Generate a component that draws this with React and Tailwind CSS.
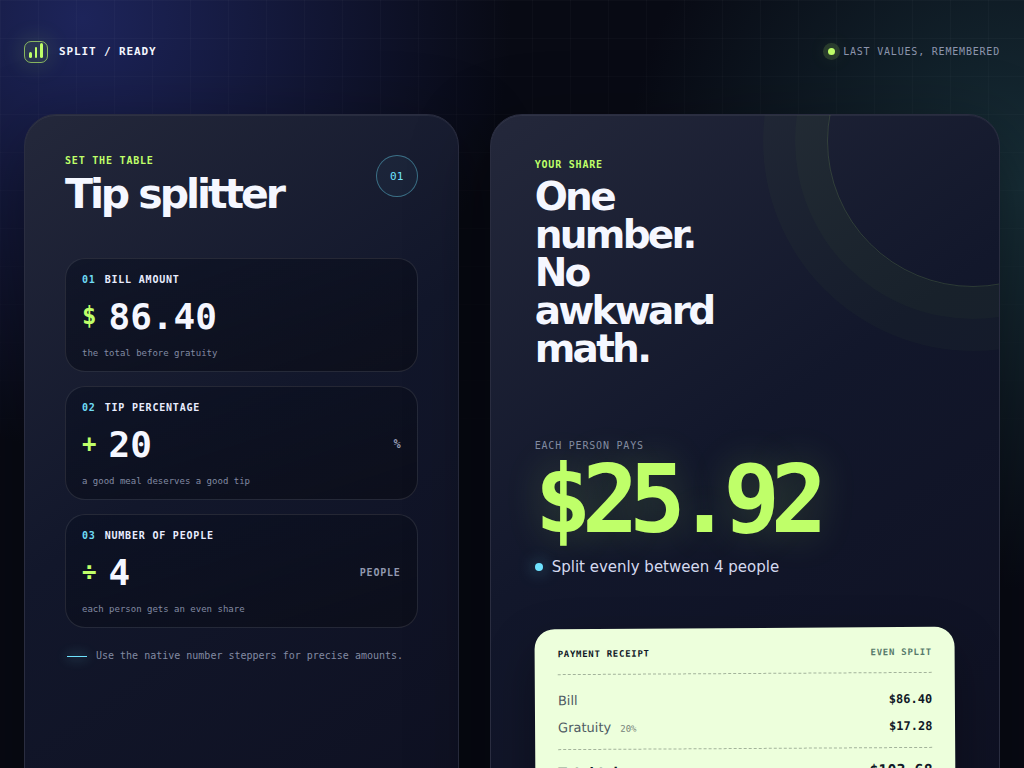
import React, { useState } from "react";

const formatMoney = (value) =>
  new Intl.NumberFormat("en-US", { style: "currency", currency: "USD" }).format(value);

const Field = ({ id, step, label, symbol, unit, unitClass, hint, value, onChange, ...rest }) => (
  <div className="rounded-[20px] border border-white/10 bg-linear-to-br from-[#0a1022]/60 to-[#0c0e19]/80 px-4 pt-[13px] pb-[10px]">
    <label htmlFor={id} className="flex gap-[9px] text-[10px] leading-4 font-bold tracking-[0.08em] text-[#e9edff]">
      <span className="font-bold text-[#6fdcf5]">{step}</span>
      {label}
    </label>
    <div className="mt-[6px] flex h-11 items-center gap-3">
      <span className="text-2xl font-bold text-[#bfff69]">{symbol}</span>
      <input
        id={id}
        type="number"
        className="h-11 w-full min-w-0 flex-1 bg-transparent text-4xl font-bold text-[#f5f7ff] outline-none"
        value={value}
        onChange={(e) => onChange(e.target.value)}
        {...rest}
      />
      {unit && <span className={`font-bold text-[#9299b0] ${unitClass}`}>{unit}</span>}
    </div>
    <p className="mt-[7px] text-[9px] leading-4 text-[#828aa2]">{hint}</p>
  </div>
);

const ReceiptRow = ({ label, note, amount }) => (
  <div className="flex h-[27px] items-center justify-between">
    <dt className="text-[13px] text-[#4e5a63]">
      {label}
      {note && <span className="ml-[9px] font-['DejaVu_Sans_Mono',monospace] text-[9px] text-[#738078]">{note}</span>}
    </dt>
    <dd className="font-['DejaVu_Sans_Mono',monospace] text-xs font-bold">{amount}</dd>
  </div>
);

const App = () => {
  const [bill, setBill] = useState("86.40");
  const [tip, setTip] = useState("20");
  const [people, setPeople] = useState("4");

  const billAmount = Number(bill) || 0;
  const gratuity = billAmount * ((Number(tip) || 0) / 100);
  const total = billAmount + gratuity;
  const count = Math.max(1, Math.floor(Number(people) || 1));

  return (
    <div className="relative min-h-screen overflow-hidden bg-[#080a14] bg-[radial-gradient(circle_at_8%_2%,#1d245a_0,transparent_430px),radial-gradient(circle_at_100%_190px,#172e37_0,transparent_400px)] px-6 pb-12 font-['DejaVu_Sans_Mono',monospace] text-[#f5f7ff]">
      {/* background grid */}
      <div className="pointer-events-none absolute inset-x-0 top-0 h-screen bg-[linear-gradient(rgba(255,255,255,0.025)_1px,transparent_1px),linear-gradient(90deg,rgba(255,255,255,0.025)_1px,transparent_1px)] bg-[size:38px_38px] [mask-image:linear-gradient(to_bottom,black,transparent_75%)]" />

      <header className="relative flex h-[103px] items-center justify-between">
        <div className="flex items-center gap-[11px]">
          <svg className="h-[22px] w-6 overflow-visible rounded-[7px] shadow-[0_0_24px_rgba(191,255,105,0.18)]" viewBox="0 0 24 22" fill="none">
            <rect x="0.5" y="0.5" width="23" height="21" rx="6.5" fill="#bfff69" fillOpacity="0.1" stroke="#bfff69" strokeOpacity="0.65" />
            <rect x="5" y="11" width="3" height="6" rx="1.5" fill="#bfff69" />
            <rect x="11" y="6" width="2" height="11" rx="1" fill="#bfff69" />
            <rect x="16" y="2" width="3" height="15" rx="1.5" fill="#bfff69" />
          </svg>
          <span className="text-[11px] leading-[17px] font-bold tracking-[0.08em]">SPLIT / READY</span>
        </div>
        <div className="flex items-center gap-2 text-[10px] tracking-[0.08em] text-[#8d95ad]">
          <span className="size-[7px] rounded-full bg-[#bfff69] shadow-[0_0_0_5px_rgba(191,255,105,0.14),0_0_18px_rgba(191,255,105,0.35)]" />
          LAST VALUES, REMEMBERED
        </div>
      </header>

      <main className="relative mt-[11px] grid gap-[31px] md:grid-cols-[0.92fr_1.08fr]">
        <section className="rounded-[32px] border border-[#2a2d40] bg-linear-145 from-[#24283b] via-[#12172b] via-45% to-[#0e1021] p-10 shadow-[inset_0_1px_0_rgba(255,255,255,0.06),0_24px_80px_rgba(0,0,0,0.4)]">
          <div className="mb-[43px] flex justify-between">
            <div>
              <p className="text-[10px] leading-3 font-bold tracking-[0.08em] text-[#bfff69]">SET THE TABLE</p>
              <h1 className="mt-[6px] font-['DejaVu_Sans',sans-serif] text-[41px] leading-[42px] font-bold tracking-[-0.075em]">Tip splitter</h1>
            </div>
            <span className="flex size-[42px] items-center justify-center rounded-full border border-[#6fe3ff]/40 bg-[#6fe3ff]/4 text-[11px] leading-[17px] text-[#6fe3ff]">
              01
            </span>
          </div>

          <form className="flex flex-col gap-[14px]" onSubmit={(e) => e.preventDefault()}>
            <Field id="bill" step="01" label="BILL AMOUNT" symbol="$" hint="the total before gratuity" value={bill} onChange={setBill} min="0" />
            <Field id="tip" step="02" label="TIP PERCENTAGE" symbol="+" unit="%" unitClass="text-xs" hint="a good meal deserves a good tip" value={tip} onChange={setTip} min="0" />
            <Field id="people" step="03" label="NUMBER OF PEOPLE" symbol="÷" unit="PEOPLE" unitClass="text-[10px] tracking-[0.08em]" hint="each person gets an even share" value={people} onChange={setPeople} min="1" />
          </form>

          <p className="mt-5 flex items-center gap-[9px] pl-[2px] text-[10px] leading-4 text-[#828aa2]">
            <span className="h-px w-5 shrink-0 bg-[#6fe3ff] shadow-[0_0_12px_#6fe3ff]" />
            Use the native number steppers for precise amounts.
          </p>
        </section>

        <section className="relative overflow-hidden rounded-[32px] border border-[#2a2d40] bg-linear-145 from-[#24283b] via-[#12172b] via-45% to-[#0e1021] p-11 shadow-[inset_0_1px_0_rgba(255,255,255,0.06),0_24px_80px_rgba(0,0,0,0.4)]">
          <div className="pointer-events-none absolute -top-[120px] -right-[120px] size-[292px] rounded-full border border-[#bfff69]/15 shadow-[0_0_0_32px_rgba(191,255,105,0.025),0_0_0_64px_rgba(191,255,105,0.025)]" />

          <p className="text-[10px] leading-3 font-bold tracking-[0.08em] text-[#bfff69]">YOUR SHARE</p>
          <h2 className="mt-[7px] max-w-[220px] font-['DejaVu_Sans',sans-serif] text-[39px] leading-[38px] font-bold tracking-[-0.07em]">
            One number. No awkward math.
          </h2>

          <div className="mt-[72px]" aria-live="polite">
            <p className="text-[10px] leading-3 tracking-[0.08em] text-[#828aa2]">EACH PERSON PAYS</p>
            <p className="mt-[5px] text-[94px] leading-[86px] font-bold tracking-[-0.1em] text-[#bfff69] [text-shadow:0_0_40px_rgba(191,255,105,0.2)]">
              {formatMoney(total / count)}
            </p>
            <p className="mt-[11px] flex items-center gap-[9px] font-['DejaVu_Sans',sans-serif] text-[15px] leading-[26px] text-[#d5daef]">
              <span className="size-2 rounded-full bg-[#6fe3ff] shadow-[0_0_16px_rgba(111,227,255,0.6)]" />
              Split evenly between {count} people
            </p>
          </div>

          <div className="mt-12 -rotate-[0.35deg] rounded-[20px] bg-[#edffdc] px-[23px] pt-5 pb-6 font-['DejaVu_Sans',sans-serif] text-[#101827] shadow-[0_20px_50px_rgba(0,0,0,0.3)]">
            <div className="flex justify-between border-b border-dashed border-[#a3b39b] pb-[15px] font-['DejaVu_Sans_Mono',monospace] text-[9px] leading-[10px] font-bold tracking-[0.08em]">
              <h3>PAYMENT RECEIPT</h3>
              <span className="text-[#577a6b]">EVEN SPLIT</span>
            </div>
            <dl>
              <div className="border-b border-dashed border-[#a3b39b] pt-3 pb-2">
                <ReceiptRow label="Bill" amount={formatMoney(billAmount)} />
                <ReceiptRow label="Gratuity" note={`${Number(tip) || 0}%`} amount={formatMoney(gratuity)} />
              </div>
              <div className="flex items-baseline justify-between pt-[11px] font-bold">
                <dt className="text-[13px]">Total tab</dt>
                <dd className="font-['DejaVu_Sans_Mono',monospace] text-[15px]">{formatMoney(total)}</dd>
              </div>
            </dl>
          </div>
        </section>
      </main>
    </div>
  );
};

export default App;
